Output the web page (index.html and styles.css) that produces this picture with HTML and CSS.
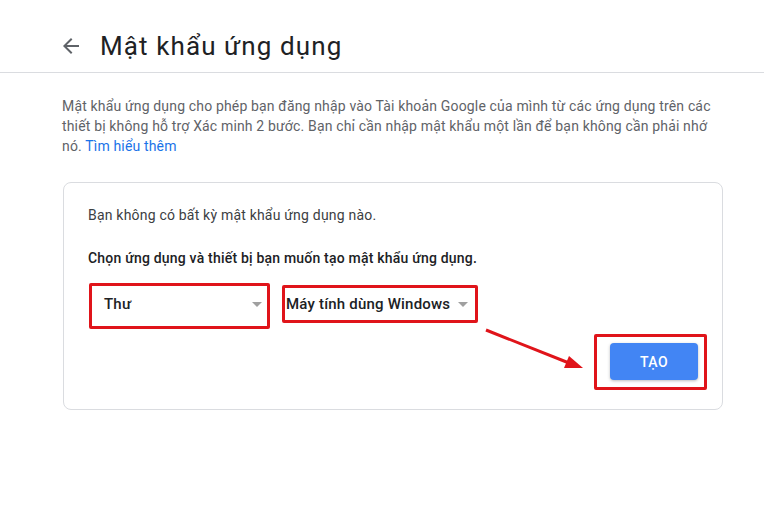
FILE: index.html
```html
<!DOCTYPE html>
<html lang="vi">
<head>
  <meta charset="UTF-8" />
  <meta name="viewport" content="width=device-width, initial-scale=1.0" />
  <title>Mật khẩu ứng dụng</title>
  <link rel="stylesheet" href="styles.css">
</head>
<body>
  <div class="page">
    <header class="topbar">
      <a class="back" href="#" aria-label="Quay lại">
        <svg width="24" height="24" viewBox="0 0 24 24"><path d="M20 11H7.83l5.59-5.59L12 4l-8 8 8 8 1.41-1.41L7.83 13H20v-2z" fill="#5f6368"/></svg>
      </a>
      <h1>Mật khẩu ứng dụng</h1>
    </header>

    <main class="content">
      <p class="intro">Mật khẩu ứng dụng cho phép bạn đăng nhập vào Tài khoản Google của mình từ các ứng dụng trên các thiết bị không hỗ trợ Xác minh 2 bước. Bạn chỉ cần nhập mật khẩu một lần để bạn không cần phải nhớ nó. <a href="#">Tìm hiểu thêm</a></p>

      <section class="card">
        <p class="empty">Bạn không có bất kỳ mật khẩu ứng dụng nào.</p>
        <p class="prompt">Chọn ứng dụng và thiết bị bạn muốn tạo mật khẩu ứng dụng.</p>

        <div class="pickers">
          <div class="mark mark-app">
            <div class="picker">
              <span>Thư</span>
              <span class="caret"></span>
            </div>
          </div>
          <div class="mark mark-device">
            <div class="picker">
              <span>Máy tính dùng Windows</span>
              <span class="caret"></span>
            </div>
          </div>
        </div>

        <div class="actions">
          <div class="mark mark-btn">
            <button class="btn" type="button">TẠO</button>
          </div>
        </div>
      </section>
    </main>

    <svg class="annot" width="764" height="516" viewBox="0 0 764 516">
      <line x1="486" y1="330" x2="569" y2="363" stroke="#e0141a" stroke-width="3"/>
      <polygon points="583,368 564,368 569,356" fill="#e0141a"/>
    </svg>
  </div>
</body>
</html>
```

FILE: styles.css
```css
* { box-sizing: border-box; }
body {
  margin: 0;
  font-family: Roboto, "Noto Sans", Arial, sans-serif;
  background: #ffffff;
  color: #202124;
}
.page {
  position: relative;
  width: 764px;
  min-height: 516px;
}
.topbar {
  height: 73px;
  display: flex;
  align-items: center;
  padding: 20px 0 0 59px;
  border-bottom: 1px solid #dadce0;
}
.back {
  display: flex;
  width: 24px;
  height: 24px;
}
.topbar h1 {
  margin: 0 0 0 17px;
  font-size: 26px;
  font-weight: 400;
  line-height: 32px;
  letter-spacing: 1.1px;
  color: #202124;
}
.content {
  padding: 23px 41px 0 62px;
}
.intro {
  margin: 0 0 26px;
  font-size: 14px;
  line-height: 20px;
  letter-spacing: 0.16px;
  color: #5f6368;
}
.intro a {
  color: #1a73e8;
  text-decoration: none;
}
.card {
  margin-left: 1px;
  border: 1px solid #dadce0;
  border-radius: 8px;
  padding: 22px 24px 19px;
}
.card p {
  margin: 0;
  font-size: 14px;
  line-height: 20px;
  letter-spacing: 0.2px;
}
.empty {
  color: #3c4043;
}
.prompt {
  margin-top: 23px !important;
  font-weight: 500;
  color: #202124;
}
.pickers {
  display: flex;
  align-items: flex-start;
  gap: 12px;
  margin: 15px 0 0 1px;
}
.mark {
  border: 3px solid #e0141a;
  border-radius: 2px;
}
.picker {
  display: flex;
  align-items: center;
  justify-content: space-between;
  height: 100%;
  font-size: 15px;
  font-weight: 500;
  letter-spacing: 0.2px;
  color: #202124;
}
.mark-app {
  width: 181px;
  height: 46px;
  padding: 0 5px 4px 12px;
}
.mark-device {
  width: 196px;
  height: 38px;
  margin-top: 2px;
  padding: 0 7px 0 1px;
}
.caret {
  width: 0;
  height: 0;
  border-left: 5px solid transparent;
  border-right: 5px solid transparent;
  border-top: 5px solid #a0a0a0;
}
.actions {
  display: flex;
  justify-content: flex-end;
  margin-top: 5px;
  margin-right: -9px;
}
.mark-btn {
  padding: 6px 6px 7px 13px;
}
.btn {
  display: block;
  width: 88px;
  height: 37px;
  border: none;
  border-radius: 4px;
  background: #4285f4;
  color: #ffffff;
  font-family: Roboto, Arial, sans-serif;
  font-size: 14px;
  font-weight: 500;
  letter-spacing: 0.5px;
  box-shadow: 0 1px 3px rgba(60, 64, 67, 0.35);
  cursor: pointer;
}
.annot {
  position: absolute;
  left: 0;
  top: 0;
  pointer-events: none;
}
```
